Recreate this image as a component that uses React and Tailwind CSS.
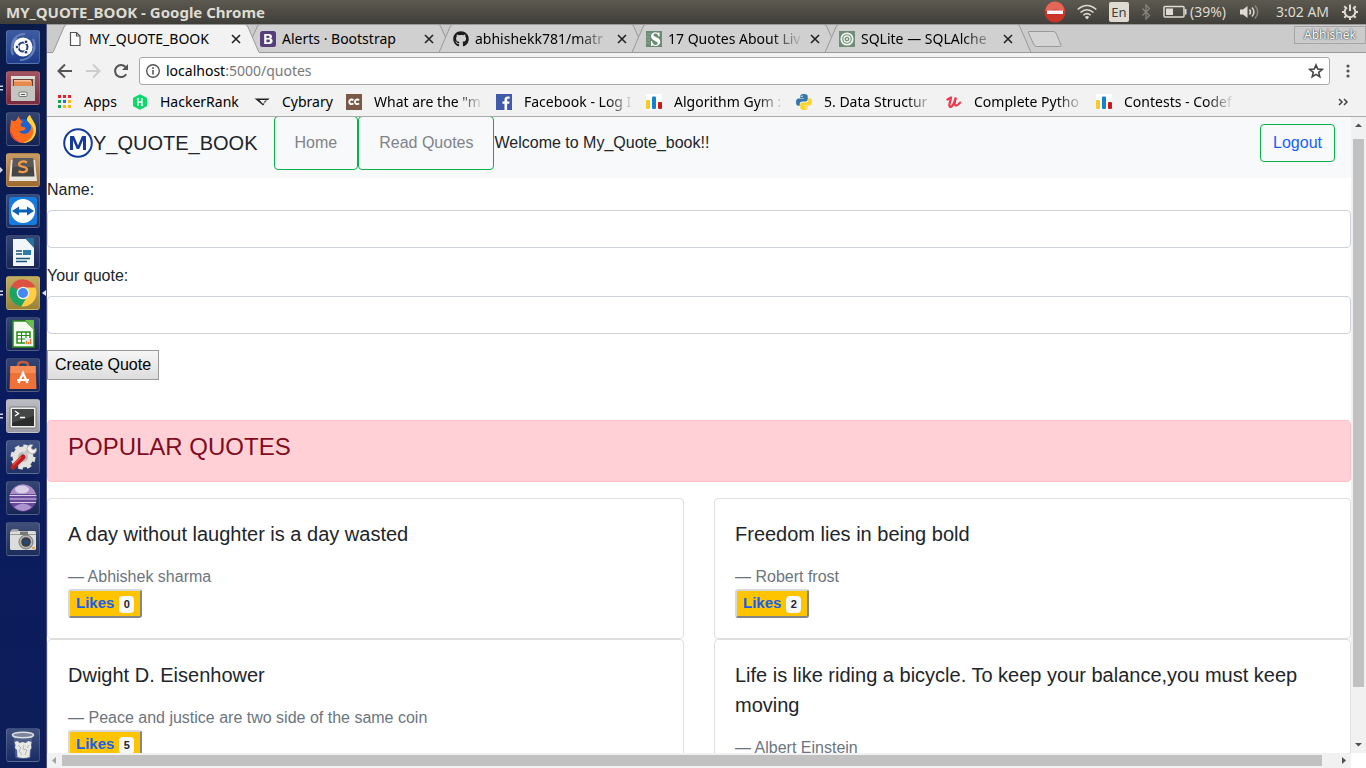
import React from "react";
import { FaGithub } from "react-icons/fa";

const UI_FONT = "font-['Noto_Sans',sans-serif]";

/* ---------- favicons ---------- */

function DocIcon() {
  return (
    <svg viewBox="0 0 16 16" className="h-4 w-4" fill="#fff" stroke="#555" strokeWidth="1.2">
      <path d="M3.5 1.5h6l3.5 3.5v9.5h-9.5z" />
      <path d="M9.5 1.5v3.500h3.500" fill="none" />
    </svg>
  );
}

function BootstrapIcon() {
  return (
    <svg viewBox="0 0 16 16" className="h-4 w-4">
      <rect width="16" height="16" rx="2.500" fill="#563d7c" />
      <path
        fillRule="evenodd"
        fill="#fff"
        d="M4.200 3h4.700c1.900 0 3.100.9 3.100 2.400 0 1-.5 1.700-1.400 2 1.200.2 2 1.200 2 2.500 0 1.900-1.400 3.100-3.600 3.100H4.200zM6.400 4.800v2.200h1.500c1 0 1.600-.4 1.600-1.100S9.100 4.800 8.200 4.800zm0 3.800v2.600h1.800c1.100 0 1.700-.5 1.700-1.300S9.300 8.600 8.200 8.600z"
      />
    </svg>
  );
}

function SIcon() {
  return (
    <svg viewBox="0 0 16 16" className="h-4 w-4">
      <rect width="16" height="16" fill="#6b8a72" />
      <path d="M1 3h4M0 6h4M1 9h3M0 12h4" stroke="#91aa96" strokeWidth="1" />
      <path
        d="M13.500 1.500v4h-1c-.4-2-1.500-3-3-3-1.200 0-2 .6-2 1.500 0 2.300 6.800 2 6.800 6.700 0 2.500-2 4.300-4.700 4.300-1.200 0-2.200-.3-3-.8l-.9.8h-.7v-5h1c.5 2.500 1.700 4 3.600 4 1.300 0 2.100-.7 2.100-1.700C11.700 9.700 5 10 5 5.300 5 3 6.800 1.300 9.300 1.300c1.100 0 2 .3 2.700.8l.7-.6z"
        fill="#fff"
      />
    </svg>
  );
}

function AlchemyIcon() {
  return (
    <svg viewBox="0 0 16 16" className="h-4 w-4" fill="none" stroke="#f3f7f3">
      <rect width="16" height="16" fill="#6f8e76" stroke="none" />
      <circle cx="8" cy="8" r="5.700" strokeWidth="1.700" />
      <circle cx="8" cy="8" r="3" strokeWidth="1.300" />
      <circle cx="8" cy="8" r="1" fill="#f3f7f3" stroke="none" />
    </svg>
  );
}

function AppsIcon() {
  const colors = ["#e8222d", "#e8222d", "#e8222d", "#12a350", "#1a73e8", "#fbb70a", "#12a350", "#fbb70a", "#fbb70a"];
  return (
    <svg viewBox="0 0 16 16" className="h-4 w-4">
      {colors.map((c, i) => (
        <rect key={i} x={2 + (i % 3) * 5} y={1 + Math.floor(i / 3) * 5} width="3" height="3" fill={c} />
      ))}
    </svg>
  );
}

function HackerRankIcon() {
  return (
    <svg viewBox="0 0 16 16" className="h-4 w-4">
      <path d="M8 .2 14.300 3.500q.7.400.7 1.200v6.600q0 .8-.7 1.200L8 15.800 1.700 12.500Q1 12.100 1 11.300V4.700q0-.8.700-1.200z" fill="#0bd96b" />
      <path d="M6 4v8M10 4v8M6 8h4" stroke="#fff" strokeWidth="1.300" />
      <path d="M4.500 5.300 6 3.500l1.500 1.800zM8.500 10.700 10 12.500l1.500-1.800z" fill="#fff" />
    </svg>
  );
}

function CybraryIcon() {
  return (
    <svg viewBox="0 0 16 16" className="h-4 w-4">
      <path d="M.5 4.500h15L14.200 6H5.500l3 3.500h2.300L9 11.500 2.500 6z" fill="#222" />
      <path d="M11.200 8.500 13 6.500h-1.800L9.500 8.500z" fill="#444" />
    </svg>
  );
}

function CCIcon() {
  return (
    <svg viewBox="0 0 16 16" className="h-4 w-4" fill="none" stroke="#fff" strokeWidth="1.900">
      <rect width="16" height="16" fill="#7a5848" stroke="none" />
      <path d="M7.300 6.300A2.300 2.300 0 1 0 7.300 9.300M13 6.300A2.300 2.300 0 1 0 13 9.300" />
    </svg>
  );
}

function FacebookIcon() {
  return (
    <svg viewBox="0 0 16 16" className="h-4 w-4">
      <rect width="16" height="16" fill="#4059a9" />
      <path d="M8.500 16V9.800H6.400V7.400h2.100V5.600C8.500 3.500 9.800 2.400 11.700 2.400c.9 0 1.700.1 1.900.1v2.200h-1.300c-1 0-1.200.5-1.200 1.200v1.500h2.400l-.3 2.400h-2.100V16z" fill="#fff" />
    </svg>
  );
}

function BarsIcon() {
  return (
    <svg viewBox="0 0 16 16" className="h-4 w-4">
      <rect width="16" height="16" fill="#fff" />
      <rect x="0" y="6" width="4" height="9" rx="1" fill="#f9c925" />
      <rect x="6" y="2.500" width="4" height="12.500" rx="1" fill="#1583cc" />
      <rect x="12" y="8" width="4" height="7" rx="1" fill="#cf1717" />
    </svg>
  );
}

function PythonIcon() {
  return (
    <svg viewBox="0 0 16 16" className="h-4 w-4">
      <path
        d="M7.900 0C4.500 0 4.300 1.500 4.300 2.200V4h3.900v.6H2.700C1.200 4.600 0 5.700 0 8.200s1 3.500 2.200 3.500h1.500V9.800c0-1.300 1.100-2.400 2.400-2.400h3.600c1.200 0 2-.9 2-2.100V2.200C11.700.9 10.400 0 7.900 0z"
        fill="#3675a9"
      />
      <path
        d="M8.100 16c3.400 0 3.600-1.500 3.600-2.200V12H7.800v-.6h5.500c1.500 0 2.700-1.100 2.700-3.600s-1-3.500-2.200-3.500h-1.500v1.900c0 1.300-1.100 2.400-2.400 2.400H6.300c-1.200 0-2 .9-2 2.100v3.100C4.300 15.100 5.600 16 8.100 16z"
        fill="#fcd428"
      />
      <circle cx="6" cy="2.200" r=".8" fill="#fff" />
      <circle cx="10" cy="13.800" r=".8" fill="#fff" />
    </svg>
  );
}

function UdemyIcon() {
  return (
    <svg viewBox="0 0 16 16" className="h-4 w-4" fill="none" stroke="#f0394d" strokeLinecap="round" strokeLinejoin="round">
      <path d="M1.500 5.500 5 3.500C4.600 7 3.200 9.500 3.300 11.500c.1 1.600 1.600 1.700 2.700.6C8 10 9 6.500 9.500 4.500" strokeWidth="2.300" />
      <path d="M9.700 4.500C8.800 8 8.300 10.500 9.200 11.300c1 .8 3-.5 5-2.800" strokeWidth="2" />
    </svg>
  );
}

/* ---------- system panel ---------- */

function SystemPanel() {
  return (
    <header className="flex h-6 shrink-0 items-center justify-between bg-gradient-to-b from-[#5c5a50] to-[#3f3e39] pl-[6px] pr-[7px] text-[#dfdbd2]">
      <h1 className="text-[15px] font-bold leading-6">MY_QUOTE_BOOK - Google Chrome</h1>
      <div className="flex items-center text-[14px] leading-6">
        <svg viewBox="0 0 22 22" className="mr-[11px] h-[22px] w-[22px]">
          <circle cx="11" cy="11" r="10.500" fill="#c9352b" />
          <path d="M1.500 10a9.500 9.500 0 0 1 19 0q-9.500-3-19 0z" fill="#e2695a" />
          <rect x="3" y="9.500" width="16" height="3.500" rx=".5" fill="#fff" />
        </svg>
        <svg viewBox="0 0 20 16" className="mr-3 h-4 w-5" fill="none" stroke="#dfdbd2" strokeWidth="1.500" aria-label="Network">
          <path d="M.7 5.500q9.300-8 18.600 0M3.500 8.500q6.500-5.600 13 0M6.300 11.200q3.700-3.200 7.400 0" />
          <path d="M7.800 13q2.200-1.800 4.400 0L10 15.500z" fill="#dfdbd2" stroke="none" />
        </svg>
        <span className="mr-3 flex h-5 w-5 items-center justify-center rounded-[2px] bg-[#dfdbd2] text-[13px] leading-5 text-[#3f3e39]">En</span>
        <svg viewBox="0 0 10 18" className="mr-3 h-[18px] w-[10px]" fill="none" stroke="#8a877e" strokeWidth="1.200">
          <path d="M1.500 5.500 8.500 12.500 5 16V2l3.500 3.500-7 7" />
        </svg>
        <svg viewBox="0 0 24 14" className="mr-[3px] h-[14px] w-6">
          <rect x="1" y="1.500" width="20" height="10.500" rx="1" fill="none" stroke="#dfdbd2" strokeWidth="1.500" />
          <rect x="22" y="4" width="1.500" height="5.500" fill="#dfdbd2" />
          <rect x="3" y="3.500" width="7" height="6.500" fill="#dfdbd2" />
        </svg>
        <span className="w-[39px] whitespace-nowrap">(39%)</span>
        <svg viewBox="0 0 20 16" className="ml-[11px] mr-4 h-4 w-5" fill="none" stroke="#dfdbd2" strokeWidth="1.500">
          <path d="M0 5.500h3L7.500 2v12L3 10.500H0z" fill="#dfdbd2" stroke="none" />
          <path d="M9.500 5.500q2 2.500 0 5" />
          <path d="M12 3.500q4 4.500 0 9" />
          <path d="M15 1.500q5.500 6.500 0 13" stroke="#8a877e" />
        </svg>
        <time className="mr-[11px] w-[54px] whitespace-nowrap">3:02 AM</time>
        <svg viewBox="0 0 18 18" className="h-[18px] w-[18px]" fill="none" stroke="#dfdbd2">
          <path d="M6 4.500a5.300 5.300 0 1 0 6 0" strokeWidth="2" />
          <path d="M9 1.500V8" strokeWidth="2" />
          <path d="M1 9h2.500M14.500 9H17M3.300 14.700l1.700-1.700M14.700 14.700 13 13M9 14.500V17M3.300 3.300 5 5M14.700 3.300 13 5" strokeWidth="2" />
        </svg>
      </div>
    </header>
  );
}

/* ---------- launcher ---------- */

const launcherApps = [
  {
    name: "Dash", tile: "from-[#3d5b9f] to-[#1d3d8c]", art: (
      <>
        <path d="M6 17C6 8 12 4 19 4M28 16c0 9-6 14-14 14M7 25c-3-6-1-13 4-17M27 9c3 6 2 13-3 17" stroke="#8097ca" strokeWidth="2" fill="none" opacity=".7" />
        <circle cx="17" cy="17" r="9.500" fill="#fff" />
        <circle cx="17" cy="17" r="4.500" fill="none" stroke="#243c77" strokeWidth="2" />
        <circle cx="11" cy="17" r="1.900" fill="#243c77" stroke="#fff" />
        <circle cx="20" cy="11.800" r="1.900" fill="#243c77" stroke="#fff" />
        <circle cx="20" cy="22.200" r="1.900" fill="#243c77" stroke="#fff" />
      </>
    ),
  },
  {
    name: "Files", tile: "from-[#a25463] to-[#792b3b]", mark: "two", art: (
      <>
        <rect x="5" y="5" width="24" height="25" rx="1.500" fill="#b7b7b4" />
        <rect x="5" y="5" width="24" height="3" fill="#dededb" />
        <rect x="7" y="8" width="20" height="8" fill="#6b4132" />
        <path d="M8 10h18v6H8z" fill="#e88950" />
        <path d="M8 9h17v1.500H8z" fill="#f6c29b" />
        <rect x="5" y="15" width="24" height="15" rx="1" fill="#c4c4c1" />
        <rect x="13" y="21" width="8" height="4.500" rx="1" fill="#eee" stroke="#777" />
        <path d="M15 23.500h4" stroke="#555" />
      </>
    ),
  },
  {
    name: "Firefox", tile: "from-[#344574] to-[#152454]", art: (
      <>
        <circle cx="17" cy="18" r="11" fill="#1d62cf" />
        <path d="M5 7c1 2 2 2 4 2 2-1 3-4 4-5 0 3 2 4 4 6-3 1-3 3-1 5 2 0 3 0 4 1-1 3-5 3-7 3 3 5 11 3 12-3 0-4-2-6-4-8 0-2 1-4 3-5 0 4 6 8 6 15S24 31 17 31 4 25 4 19c0-5 1-8 1-12z" fill="#ff6a1d" />
        <path d="M24 3c1 4 6 8 6 14 0 9-6 14-13 14 8-3 11-8 10-13 0-6-5-7-6-10 0-2 1-4 3-5z" fill="#ffd53a" />
        <path d="M4 18c1 8 7 13 14 13-6-1-10-4-12-9z" fill="#e8265a" />
      </>
    ),
  },
  {
    name: "Sublime Text", tile: "from-[#c79b62] to-[#9d692f]", mark: "one", art: (
      <>
        <path d="M5 7h24l2 21H3z" fill="#e8e5df" />
        <path d="M7 5h20l1.500 18.500h-23z" fill="#464646" />
        <path d="M7 5h20l.7 9H6.300z" fill="#5a5a5a" />
        <path d="M21 9.500c-3-2-8-1-8 2 0 3 8 1.500 8 4.800 0 3-5 3.500-8.500 2" fill="none" stroke="#f59a44" strokeWidth="2.200" />
      </>
    ),
  },
  {
    name: "TeamViewer", tile: "from-[#33497f] to-[#1c3166]", art: (
      <>
        <rect x="3" y="3" width="28" height="28" rx="3" fill="#157bdc" />
        <circle cx="17" cy="17" r="12" fill="#fff" />
        <path d="M6 17l7-4.500v3h8v-3l7 4.500-7 4.500v-3h-8v3z" fill="#0a60b4" />
      </>
    ),
  },
  {
    name: "Writer", tile: "from-[#344574] to-[#182656]", art: (
      <>
        <path d="M7 4h13l8 8v19H7z" fill="#f2f6f9" />
        <path d="M19 3h8q1 0 1 1v9z" fill="#23719f" />
        <path d="M10 16h6M10 19h6M10 23.500h14M10 26.500h11" stroke="#16577c" strokeWidth="1.700" />
        <rect x="17" y="15" width="8" height="5" fill="#2b7cab" />
      </>
    ),
  },
  {
    name: "Chrome", tile: "from-[#c1ac5f] to-[#9b8336]", mark: "both", art: (
      <>
        <path d="M17 17 5 10.500A13.500 13.500 0 0 1 29.500 12H17z" fill="#dd5144" />
        <path d="M17 17 5.300 10.300A13.500 13.500 0 0 0 15.500 30.400L21.500 20z" fill="#1da462" />
        <path d="M17 11.500h12.300A13.500 13.500 0 0 1 15.300 30.400L22 19z" fill="#ffcd46" />
        <circle cx="17" cy="17" r="6.300" fill="#f3f3f3" />
        <circle cx="17" cy="17" r="5" fill="#4587f3" />
      </>
    ),
  },
  {
    name: "Calc", tile: "from-[#344574] to-[#182656]", art: (
      <>
        <path d="M7 4h13l8 8v18H7z" fill="#f4faf0" stroke="#2c9018" strokeWidth="1.500" />
        <path d="M19 3h8q1 0 1 1v9z" fill="#6bbd4d" />
        <path d="M11 15h13v11H11z" fill="#fff" stroke="#268b17" strokeWidth="1.500" />
        <path d="M11 18.500h13M11 22h13M15.500 15v11M20 15v11" stroke="#268b17" strokeWidth="1.200" />
        <rect x="19" y="21" width="7" height="7" fill="#dfe9ef" />
        <path d="M20.500 27v-3M22.500 27v-2M24.500 27v-5" stroke="#e0762d" strokeWidth="1.300" />
      </>
    ),
  },
  {
    name: "Software", tile: "from-[#344574] to-[#182656]", art: (
      <>
        <path d="M12 10V7q0-3 5-3t5 3v3" fill="none" stroke="#c05b39" strokeWidth="2.500" />
        <path d="M4.500 8h25l1 23h-27z" fill="#ee7137" />
        <path d="M4.500 8h25l.3 7H4.200z" fill="#f68c55" />
        <path d="M12.500 25 17 15l4.500 10M11 22h12" fill="none" stroke="#fff" strokeWidth="2.200" />
      </>
    ),
  },
  {
    name: "Terminal", tile: "from-[#bbbcc1] to-[#9a9ba2]", mark: "two", art: (
      <>
        <rect x="4" y="8" width="26" height="21" rx="1" fill="#eeeeeb" stroke="#777" />
        <rect x="6" y="10" width="22" height="17" fill="#2b2d2c" />
        <path d="M6 10h22v7L6 24z" fill="#444746" />
        <path d="m9 12 3.500 2.500L9 17M14 18.500h5" fill="none" stroke="#fff" strokeWidth="1.400" />
      </>
    ),
  },
  {
    name: "Settings", tile: "from-[#405484] to-[#203266]", art: (
      <>
        <circle cx="17" cy="17" r="10.500" fill="#e2e2df" stroke="#e2e2df" strokeWidth="4" strokeDasharray="4.500 3.750" />
        <circle cx="17" cy="17" r="10" fill="#e2e2df" />
        <circle cx="17" cy="17" r="5" fill="#b6b7ba" />
        <path d="M15 18 24 9" stroke="#c8c8c8" strokeWidth="4" />
        <path d="M22 11a4 4 0 0 1 5-6l-2 3 2 2 3-2a4 4 0 0 1-6 5z" fill="#f0f0ee" stroke="#999" strokeWidth=".7" />
        <path d="m7 27 10-10" stroke="#c01e1e" strokeWidth="5" strokeLinecap="round" />
        <path d="m7 25 8-8" stroke="#ee5549" strokeWidth="1.200" />
      </>
    ),
  },
  {
    name: "Eclipse", tile: "from-[#344574] to-[#182656]", art: (
      <>
        <circle cx="17" cy="17" r="13.500" fill="#69499a" />
        <path d="M4 13a13.500 13.500 0 0 1 26 0z" fill="#a98dc4" />
        <ellipse cx="16" cy="8.500" rx="7" ry="4" fill="#dacfe7" />
        <path d="M8 26q9-7 18 0-9 8-18 0z" fill="#ad93ce" />
        <path d="M3.500 14.500h27M3.500 18h27M4 21.500h26" stroke="#d9cde8" strokeWidth="1.200" />
      </>
    ),
  },
  {
    name: "Camera", tile: "from-[#405077] to-[#1b2c5b]", art: (
      <>
        <rect x="4" y="9" width="26" height="19" rx="1.500" fill="#dcdcda" />
        <path d="M5 9h7V7.500H6zM4 12.500h26" stroke="#999" fill="#bbb" />
        <rect x="14" y="9.500" width="8" height="3.500" fill="#777" />
        <circle cx="20" cy="20" r="7" fill="#b5b5b5" stroke="#777" />
        <circle cx="20" cy="20" r="4.800" fill="#393e47" />
        <circle cx="20" cy="20" r="2" fill="#1c4f8c" />
        <circle cx="27.500" cy="26" r="1.300" fill="#e79227" />
      </>
    ),
  },
];

function LauncherItem({ app }) {
  return (
    <li className="relative flex justify-center pr-px">
      {app.mark && (
        <svg viewBox="0 0 4 8" className="absolute left-0 top-[13px] h-2 w-1" fill="#d5d8e2">
          {app.mark === "one" ? <path d="M0 1l3 3-3 3z" /> : <path d="M0 1.500h3v1.500H0zM0 5h3v1.500H0z" />}
        </svg>
      )}
      <button aria-label={app.name} className={"h-[34px] w-[34px] rounded-[3px] border border-white/15 bg-gradient-to-b " + app.tile}>
        <svg viewBox="1 1 32 32" className="h-8 w-8">{app.art}</svg>
      </button>
      {app.mark === "both" && (
        <svg viewBox="0 0 4 8" className="absolute right-0 top-[13px] h-2 w-1" fill="#e5e8ef">
          <path d="M4 1 0 4l4 3z" />
        </svg>
      )}
    </li>
  );
}

const trash = {
  name: "Trash", tile: "from-[#405080] to-[#182b65]", art: (
    <>
      <path d="M7.500 7h19l-2 23q-7.500 2-15 0z" fill="#4f5e8a" />
      <path d="M8.500 14l3-1 2 2 3-1 3 1 3-2 3 1-.5 3 .5 3-1.500 2-.5 7q-6 2-12 0l-.5-7L9 20l.500-3z" fill="#e8e8e4" />
      <path d="m12 17 3 3-2 3 3 4M18 17l-1 4 4 1-2 5M23 17l-2 3" stroke="#b6b6b2" fill="none" />
      <ellipse cx="17" cy="7" rx="10.500" ry="2.700" fill="#7c84a0" stroke="#dcdedd" strokeWidth="1.600" />
    </>
  ),
};

function Launcher() {
  return (
    <nav aria-label="Launcher" className="flex w-[47px] shrink-0 flex-col justify-between border-r border-[#4d5078] bg-gradient-to-b from-[#0a1b49] via-[#0a1b5f] to-[#0d1d59] py-[6px]">
      <ul className="flex flex-col gap-[7px]">
        {launcherApps.map((app) => <LauncherItem key={app.name} app={app} />)}
      </ul>
      <ul><LauncherItem app={trash} /></ul>
    </nav>
  );
}

/* ---------- browser chrome ---------- */

const tabs = [
  { title: "MY_QUOTE_BOOK", icon: <DocIcon />, active: true },
  { title: "Alerts · Bootstrap", icon: <BootstrapIcon /> },
  { title: "abhishekk781/matr", icon: <FaGithub className="h-4 w-4 text-[#1b1b1b]" />, fade: true },
  { title: "17 Quotes About Liv", icon: <SIcon />, fade: true },
  { title: "SQLite — SQLAlche", icon: <AlchemyIcon />, fade: true },
];

const FADE = " [mask-image:linear-gradient(to_right,black_75%,transparent)]";

function Tab({ tab }) {
  return (
    <div role="tab" aria-selected={!!tab.active} className={"relative flex h-[29px] w-[193px] min-w-0 items-center pl-[14px] " + (tab.active ? "z-10" : "")}>
      <svg viewBox="0 0 206 29" className="absolute left-0 top-0 h-[29px] w-[206px]">
        <path d="M0 28.500 11 3q1-2.500 3-2.500h178q2 0 3 2.500l11 25.500" fill={tab.active ? "#f2f2f2" : "#d0d0d0"} stroke="#999" />
        <path d="M0 28.500h206" stroke={tab.active ? "#f2f2f2" : "#999"} />
      </svg>
      <span className="relative h-4 w-4 shrink-0">{tab.icon}</span>
      <span className={"relative ml-[6px] w-[136px] whitespace-nowrap text-[14px] leading-5 text-black" + (tab.fade ? FADE : "")}>{tab.title}</span>
      <button aria-label="Close tab" className="relative ml-[3px] flex h-4 w-4 items-center justify-center">
        <svg viewBox="0 0 10 10" className="h-[10px] w-[10px]" stroke="#222" strokeWidth="1.600"><path d="m1 1 8 8M9 1 1 9" /></svg>
      </button>
    </div>
  );
}

function TabStrip() {
  return (
    <div className="flex h-[29px] shrink-0 border-b border-t border-[#999] bg-[#cbcbcb] pl-[6px]">
      <div role="tablist" className="-mt-px flex h-[29px]">
        {tabs.map((t) => <Tab key={t.title} tab={t} />)}
      </div>
      <button aria-label="New tab" className="ml-[9px] mt-[5px] h-[18px] w-9">
        <svg viewBox="0 0 36 18" className="h-[18px] w-9"><path d="M2 1.500h24q2 0 3 1.500l5 12q.5 1.500-1.500 1.500H10q-2 0-3-1.500L1.500 3Q1 1.500 2 1.500z" fill="#d4d4d4" stroke="#999" /></svg>
      </button>
      <div className="ml-auto mt-px flex h-[18px] w-[72px] items-center justify-center border border-[#a5a5a5] bg-[#cbcbcb] text-[12px] text-white [text-shadow:0_0_2px_#333,0_0_1px_#333]">Abhishek</div>
    </div>
  );
}

function Toolbar() {
  return (
    <div className="flex h-9 shrink-0 items-center bg-[#f2f2f2] pl-[10px] pr-[10px]">
      <button aria-label="Back" className="mr-3 h-4 w-4">
        <svg viewBox="0 0 16 16" className="h-4 w-4" fill="none" stroke="#555" strokeWidth="2"><path d="M15 8H2M8 1.500 1.500 8 8 14.500" /></svg>
      </button>
      <button aria-label="Forward" className="mr-3 h-4 w-4">
        <svg viewBox="0 0 16 16" className="h-4 w-4" fill="none" stroke="#ccc" strokeWidth="2"><path d="M1 8h13M8 1.500 14.500 8 8 14.500" /></svg>
      </button>
      <button aria-label="Reload" className="mr-[10px] h-4 w-4">
        <svg viewBox="0 0 16 16" className="h-4 w-4"><path d="M13.200 11.200A6 6 0 1 1 12.500 4" fill="none" stroke="#555" strokeWidth="2" /><path d="M15 1v6H9z" fill="#555" /></svg>
      </button>
      <div className="flex h-7 min-w-0 flex-1 items-center rounded-[3px] border border-[#a8a8a8] bg-white px-[5px]">
        <svg viewBox="0 0 16 16" className="h-4 w-4 shrink-0" fill="none" stroke="#555"><circle cx="8" cy="8" r="6.300" strokeWidth="1.400" /><path d="M8 7v4.500M8 4.300V6" strokeWidth="1.600" /></svg>
        <a href="#quotes" className="ml-[5px] flex-1 text-[14px] leading-5 text-[#777]"><span className="text-black">localhost</span>:5000/quotes</a>
        <button aria-label="Bookmark this page" className="h-4 w-4">
          <svg viewBox="0 0 16 16" className="h-4 w-4" fill="none" stroke="#444" strokeWidth="1.600"><path d="M8 2 9.700 6.100l4.400.4-3.400 2.900 1.100 4.300L8 11.400l-3.800 2.300 1.100-4.300-3.400-2.900 4.400-.4z" /></svg>
        </button>
      </div>
      <button aria-label="Menu" className="ml-[10px] flex h-4 w-4 justify-center">
        <svg viewBox="0 0 4 16" className="h-4 w-1" fill="#555"><circle cx="2" cy="3" r="1.600" /><circle cx="2" cy="8" r="1.600" /><circle cx="2" cy="13" r="1.600" /></svg>
      </button>
    </div>
  );
}

const bookmarks = [
  { text: "Apps", icon: <AppsIcon />, w: "w-[76px]" },
  { text: "HackerRank", icon: <HackerRankIcon />, w: "w-[122px]" },
  { text: "Cybrary", icon: <CybraryIcon />, w: "w-[92px]" },
  { text: "What are the \"m", icon: <CCIcon />, w: "w-[150px]", fade: true },
  { text: "Facebook - Log I", icon: <FacebookIcon />, w: "w-[150px]", fade: true },
  { text: "Algorithm Gym :", icon: <BarsIcon />, w: "w-[150px]", fade: true },
  { text: "5. Data Structur", icon: <PythonIcon />, w: "w-[150px]", fade: true },
  { text: "Complete Pytho", icon: <UdemyIcon />, w: "w-[150px]", fade: true },
  { text: "Contests - Codef", icon: <BarsIcon />, w: "w-[150px]", fade: true },
];

function BookmarksBar() {
  return (
    <div className="flex h-7 shrink-0 items-center border-b border-[#aaa] bg-[#f2f2f2] pb-[2px] pl-[9px] pr-[17px]">
      {bookmarks.map((b) => (
        <a key={b.text} href="#bookmark" className={"flex shrink-0 items-center gap-3 " + b.w}>
          <span className="h-4 w-4 shrink-0">{b.icon}</span>
          <span className={"whitespace-nowrap text-[14px] leading-5 text-black" + (b.fade ? " w-[110px]" + FADE : "")}>{b.text}</span>
        </a>
      ))}
      <button aria-label="More bookmarks" className="ml-auto h-4 w-3">
        <svg viewBox="0 0 12 16" className="h-4 w-3" fill="none" stroke="#444" strokeWidth="1.500"><path d="m2 5 3 3-3 3M7 5l3 3-3 3" /></svg>
      </button>
    </div>
  );
}

/* ---------- web page ---------- */

function SiteNav() {
  return (
    <nav className="flex h-[61px] shrink-0 items-start overflow-hidden bg-[#f8f9fb] px-4">
      <a href="#home" className="mr-4 mt-[11px] flex items-center text-[20px] leading-[30px] text-[#212529]">
        <svg viewBox="0 0 30 30" className="h-[30px] w-[30px]" fill="none" stroke="#143a9c">
          <circle cx="15" cy="15" r="13.800" strokeWidth="2" fill="#fff" />
          <path d="M7 22V8h4L15 17.500 19 8h4v14h-3V12.200L16.200 21h-2.400L10 12.200V22z" fill="#143a9c" stroke="none" />
        </svg>
        Y_QUOTE_BOOK
      </a>
      <a href="#home" className="-mt-px h-[54px] rounded border border-[#0ab04a] px-5 pt-[14px] text-[#808388]">Home</a>
      <a href="#quotes" className="-mt-px h-[54px] rounded border border-[#0ab04a] px-5 pt-[14px] text-[#808388]">Read Quotes</a>
      <span className="mt-[14px]">Welcome to My_Quote_book!!</span>
      <button className="ml-auto mt-[7px] h-[38px] rounded border border-[#0ab04a] px-3 text-[#145fff]">Logout</button>
    </nav>
  );
}

function Field({ id, label }) {
  return (
    <div className="mb-4">
      <label htmlFor={id} className="mb-2 block">{label}</label>
      <input id={id} type="text" className="block h-[38px] w-full rounded border border-[#ced4da] bg-white px-3 outline-none" />
    </div>
  );
}

const quotes = [
  { text: "A day without laughter is a day wasted", by: "Abhishek sharma", likes: 0 },
  { text: "Freedom lies in being bold", by: "Robert frost", likes: 2 },
  { text: "Dwight D. Eisenhower", by: "Peace and justice are two side of the same coin", likes: 5 },
  { text: "Life is like riding a bicycle. To keep your balance,you must keep moving", by: "Albert Einstein", likes: 3 },
];

function QuoteCard({ quote }) {
  return (
    <blockquote className="rounded border border-[#dfdfdf] bg-white p-5">
      <p className="mb-4 text-[20px] leading-[30px]">{quote.text}</p>
      <footer className="text-[#6c757d]">— {quote.by}</footer>
      <button className="flex h-[29px] items-start rounded-[3px] border-2 border-b-[#858585] border-l-[#d8d8d8] border-r-[#858585] border-t-[#d8d8d8] bg-[#ffc400] px-[6px] pt-[2px] text-[15px] font-bold leading-5 text-[#145fef]">
        Likes
        <span className="ml-[5px] mt-[3px] w-[15px] rounded bg-[#f8f9fa] text-center text-[11px] leading-[17px] text-[#212529]">{quote.likes}</span>
      </button>
    </blockquote>
  );
}

function Page() {
  return (
    <div className="min-w-0 flex-1 overflow-hidden bg-white font-['Liberation_Sans',Arial,sans-serif] text-[16px] leading-6 text-[#212529]">
      <SiteNav />
      <form onSubmit={(e) => e.preventDefault()}>
        <Field id="name" label="Name:" />
        <Field id="quote" label="Your quote:" />
        <button type="submit" className="h-[30px] border border-[#999] bg-gradient-to-b from-[#f6f6f6] to-[#dddddd] px-[7px] text-black">Create Quote</button>
      </form>
      <section className="mt-10">
        <div role="alert" className="mb-4 h-[62px] rounded border border-[#ffc0c8] bg-[#ffd1d7] px-5 py-[11px]">
          <h2 className="text-[24px] leading-[29px] text-[#7f0c20]">POPULAR QUOTES</h2>
        </div>
        <div className="grid grid-cols-2 gap-x-[30px]">
          {quotes.map((q) => <QuoteCard key={q.text} quote={q} />)}
        </div>
      </section>
    </div>
  );
}

function VerticalScrollbar() {
  return (
    <div className="flex w-[15px] shrink-0 flex-col items-center bg-[#f1f1f1] px-[2px]">
      <svg viewBox="0 0 11 22" className="h-[22px] w-[11px] shrink-0"><path d="M2 10 5.500 6.500 9 10z" fill="#505050" /></svg>
      <div className="w-full grow-[548] bg-[#c1c1c1]" />
      <div className="grow-[49]" />
      <svg viewBox="0 0 11 17" className="h-[17px] w-[11px] shrink-0"><path d="M2 7 5.500 10.500 9 7z" fill="#505050" /></svg>
    </div>
  );
}

function HorizontalScrollbar() {
  return (
    <div className="flex h-[15px] shrink-0 bg-white pr-[15px]">
      <div className="flex flex-1 items-center bg-[#f1f1f1] py-[2px]">
        <svg viewBox="0 0 15 11" className="h-[11px] w-[15px] shrink-0"><path d="M9 2 5 5.500 9 9z" fill="#a3a3a3" /></svg>
        <div className="h-full grow bg-[#c1c1c1]" />
        <svg viewBox="0 0 29 11" className="h-[11px] w-[29px] shrink-0"><path d="M20 2l4 3.500L20 9z" fill="#505050" /></svg>
      </div>
    </div>
  );
}

export default function App() {
  return (
    <div className={"flex h-screen flex-col overflow-hidden " + UI_FONT}>
      <SystemPanel />
      <div className="flex min-h-0 flex-1">
        <Launcher />
        <main className="flex min-w-0 flex-1 flex-col">
          <TabStrip />
          <Toolbar />
          <BookmarksBar />
          <div className="flex min-h-0 flex-1">
            <Page />
            <VerticalScrollbar />
          </div>
          <HorizontalScrollbar />
        </main>
      </div>
    </div>
  );
}
